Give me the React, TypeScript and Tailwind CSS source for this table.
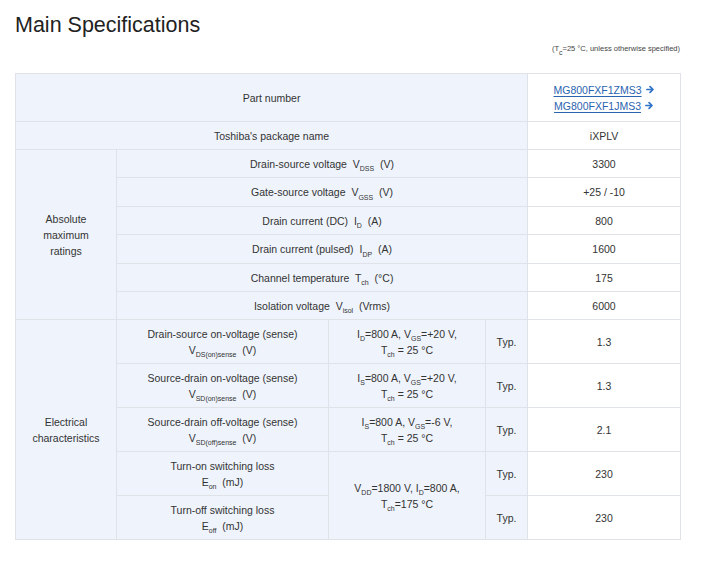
import React from "react";

const Arrow = () => (
  <svg width="9" height="9" viewBox="0 0 10 10" className="inline-block ml-[4px] align-[0px]">
    <path d="M1 5h6.5M4.5 1.8L7.8 5 4.5 8.2" stroke="#2f74c8" strokeWidth="1.9" fill="none" strokeLinecap="round" strokeLinejoin="round" />
  </svg>
);

const S = ({ children }: { children: React.ReactNode }) => (
  <sub className="text-[7px] align-[-2px] leading-none">{children}</sub>
);

const hd = "border border-[#dfe3e8] bg-[#eff4fc] text-center align-middle";
const wh = "border border-[#dfe3e8] bg-white text-center align-middle";

export default function App() {
  return (
    <div className="w-[702px] h-[565px] bg-white text-[#333] font-['Liberation_Sans',Arial,sans-serif]">
      <div className="ml-[15px] w-[665px] pt-[13px]">
        <h1 className="text-[21.5px] leading-[24px] text-[#222] font-normal">Main Specifications</h1>
        <div className="mt-[7px] text-right text-[7.5px] leading-[10px] text-[#444]">
          (T<S>c</S>=25 °C, unless otherwise specified)
        </div>
        <table className="mt-[19px] border-collapse table-fixed w-[665px] text-[10.5px] leading-[16px]">
          <colgroup>
            <col className="w-[101px]" />
            <col className="w-[212px]" />
            <col className="w-[157px]" />
            <col className="w-[42px]" />
            <col className="w-[153px]" />
          </colgroup>
          <tbody>
            <tr className="h-[48px]">
              <td colSpan={4} className={hd}>Part number</td>
              <td className={wh}>
                <div>
                  <a className="text-[#2a63b0] underline underline-offset-[2px]">MG800FXF1ZMS3</a>
                  <Arrow />
                </div>
                <div>
                  <a className="text-[#2a63b0] underline underline-offset-[2px]">MG800FXF1JMS3</a>
                  <Arrow />
                </div>
              </td>
            </tr>
            <tr className="h-[28px]">
              <td colSpan={4} className={hd}>Toshiba's package name</td>
              <td className={wh}>iXPLV</td>
            </tr>
            <tr className="h-[28px]">
              <td rowSpan={6} className={hd}>
                Absolute
                <br />
                maximum
                <br />
                ratings
              </td>
              <td colSpan={3} className={hd}>
                Drain-source voltage&nbsp; V<S>DSS</S>&nbsp; (V)
              </td>
              <td className={wh}>3300</td>
            </tr>
            <tr className="h-[29px]">
              <td colSpan={3} className={hd}>
                Gate-source voltage&nbsp; V<S>GSS</S>&nbsp; (V)
              </td>
              <td className={wh}>+25 / -10</td>
            </tr>
            <tr className="h-[28px]">
              <td colSpan={3} className={hd}>
                Drain current (DC)&nbsp; I<S>D</S>&nbsp; (A)
              </td>
              <td className={wh}>800</td>
            </tr>
            <tr className="h-[29px]">
              <td colSpan={3} className={hd}>
                Drain current (pulsed)&nbsp; I<S>DP</S>&nbsp; (A)
              </td>
              <td className={wh}>1600</td>
            </tr>
            <tr className="h-[28px]">
              <td colSpan={3} className={hd}>
                Channel temperature&nbsp; T<S>ch</S>&nbsp; (°C)
              </td>
              <td className={wh}>175</td>
            </tr>
            <tr className="h-[28px]">
              <td colSpan={3} className={hd}>
                Isolation voltage&nbsp; V<S>isol</S>&nbsp; (Vrms)
              </td>
              <td className={wh}>6000</td>
            </tr>
            <tr className="h-[44px]">
              <td rowSpan={5} className={hd}>
                Electrical
                <br />
                characteristics
              </td>
              <td className={hd}>
                Drain-source on-voltage (sense)
                <br />
                V<S>DS(on)sense</S>&nbsp; (V)
              </td>
              <td className={hd}>
                I<S>D</S>=800 A, V<S>GS</S>=+20 V,
                <br />
                T<S>ch</S> = 25 °C
              </td>
              <td className={hd}>Typ.</td>
              <td className={wh}>1.3</td>
            </tr>
            <tr className="h-[44px]">
              <td className={hd}>
                Source-drain on-voltage (sense)
                <br />
                V<S>SD(on)sense</S>&nbsp; (V)
              </td>
              <td className={hd}>
                I<S>S</S>=800 A, V<S>GS</S>=+20 V,
                <br />
                T<S>ch</S> = 25 °C
              </td>
              <td className={hd}>Typ.</td>
              <td className={wh}>1.3</td>
            </tr>
            <tr className="h-[44px]">
              <td className={hd}>
                Source-drain off-voltage (sense)
                <br />
                V<S>SD(off)sense</S>&nbsp; (V)
              </td>
              <td className={hd}>
                I<S>S</S>=800 A, V<S>GS</S>=-6 V,
                <br />
                T<S>ch</S> = 25 °C
              </td>
              <td className={hd}>Typ.</td>
              <td className={wh}>2.1</td>
            </tr>
            <tr className="h-[44px]">
              <td className={hd}>
                Turn-on switching loss
                <br />
                E<S>on</S>&nbsp; (mJ)
              </td>
              <td rowSpan={2} className={hd}>
                V<S>DD</S>=1800 V, I<S>D</S>=800 A,
                <br />
                T<S>ch</S>=175 °C
              </td>
              <td className={hd}>Typ.</td>
              <td className={wh}>230</td>
            </tr>
            <tr className="h-[44px]">
              <td className={hd}>
                Turn-off switching loss
                <br />
                E<S>off</S>&nbsp; (mJ)
              </td>
              <td className={hd}>Typ.</td>
              <td className={wh}>230</td>
            </tr>
          </tbody>
        </table>
      </div>
    </div>
  );
}
